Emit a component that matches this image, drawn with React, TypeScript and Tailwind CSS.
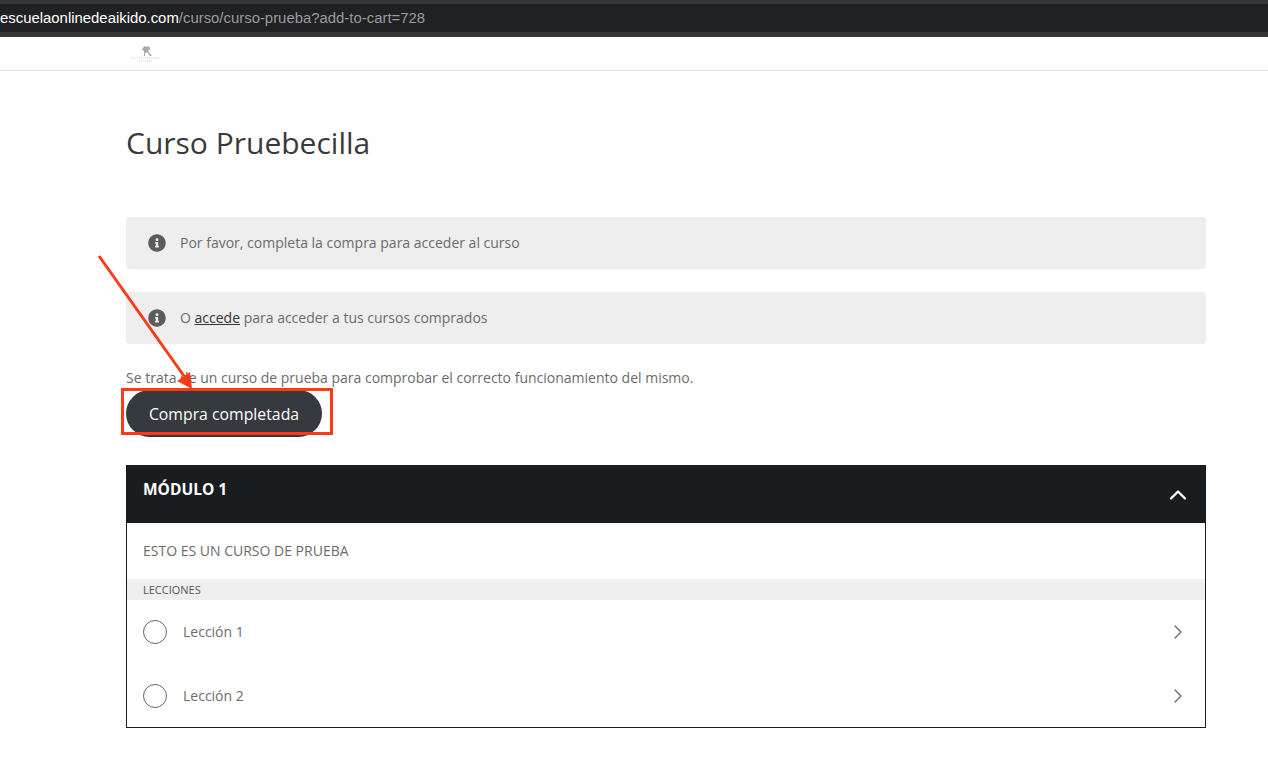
import { ChevronRight, ChevronUp } from 'lucide-react';

function InfoIcon() {
  return (
    <svg viewBox="0 0 512 512" className="w-[18px] h-[18px] shrink-0 fill-[#5c5c5c]">
      <path d="M256 8C119 8 8 119 8 256s111 248 248 248 248-111 248-248S393 8 256 8zm0 110c23 0 42 19 42 42s-19 42-42 42-42-19-42-42 19-42 42-42zm56 254c0 7-5 12-12 12h-88c-7 0-12-5-12-12v-24c0-7 5-12 12-12h12v-64h-12c-7 0-12-5-12-12v-24c0-7 5-12 12-12h64c7 0 12 5 12 12v100h12c7 0 12 5 12 12v24z" />
    </svg>
  );
}

function Notice({ children }: { children: React.ReactNode }) {
  return (
    <div className="h-[52px] bg-[#eeeeee] rounded-[4px] flex items-center pl-[22px] gap-[14px] text-[14px] text-[#6b6b6b]">
      <InfoIcon />
      <p className="-mt-[2px]">{children}</p>
    </div>
  );
}

function Lesson({ title }: { title: string }) {
  return (
    <div className="h-[64px] flex items-center pl-4 pr-[15px] text-[14px] text-[#6b6b6b]">
      <span className="w-6 h-6 rounded-full border border-[#666666] shrink-0" />
      <span className="ml-[16px] flex-1 -mt-[2px]">{title}</span>
      <ChevronRight className="w-6 h-6 text-[#666666]" strokeWidth={1.3} />
    </div>
  );
}

export default function App() {
  return (
    <div className="relative min-h-[768px] bg-white font-['Open_Sans',sans-serif] overflow-hidden">
      <div className="h-[37px] bg-[#36373b] pt-[4px] pb-[4px]">
        <div className="h-[28px] bg-[#202124] flex items-center font-['Liberation_Sans',sans-serif] text-[14.9px] text-[#9a9b9d] whitespace-nowrap">
          <span className="text-white">escuelaonlinedeaikido.com</span>/curso/curso-prueba?add-to-cart=728
        </div>
      </div>

      <header className="h-[34px] border-b border-[#e3e3e3] pl-[130px] flex items-start pt-[8px]">
        <svg viewBox="0 0 32 18" className="w-8 h-[18px]">
          <path d="M14 1l3 1 2-1 1 3-2 2 4 5h-2l-3-4-2 1v3h-1V6l-2-1z" fill="#a8a8a8" />
          <path d="M1 13h30M9 16h13" stroke="#c4c4c4" strokeWidth="0.8" strokeDasharray="1 1" />
        </svg>
      </header>

      <main className="mx-[126px] w-[1080px]">
        <h1 className="mt-[52px] text-[30px] leading-[40px] text-[#3a3a3a]">Curso Pruebecilla</h1>

        <div className="mt-[54px] flex flex-col gap-[23px]">
          <Notice>Por favor, completa la compra para acceder al curso</Notice>
          <Notice>
            O <a className="underline text-[#333333]">accede</a> para acceder a tus cursos comprados
          </Notice>
        </div>

        <p className="mt-[24px] text-[14px] leading-5 text-[#6b6b6b]">
          Se trata de un curso de prueba para comprobar el correcto funcionamiento del mismo.
        </p>

        <button className="mt-[2px] block w-[196px] h-[47px] pt-[3px] rounded-full bg-[#36393d] text-white text-[15.8px]">
          Compra completada
        </button>

        <section className="mt-[28px] border border-[#1a1d20] h-[263px]">
          <div className="-mx-px -mt-px h-[58px] bg-[#1a1d20] flex items-center justify-between pl-[17px] pr-[14px] text-white">
            <h2 className="text-[15.5px] font-bold -mt-[8px]">MÓDULO 1</h2>
            <ChevronUp className="w-7 h-7 mt-px" strokeWidth={2} />
          </div>
          <p className="h-[54px] flex items-center pl-4 text-[14px] text-[#6b6b6b]">ESTO ES UN CURSO DE PRUEBA</p>
          <div className="mt-[2px] h-[21px] pt-px bg-[#efefef] flex items-center pl-4 text-[11px] font-medium text-[#555555]">LECCIONES</div>
          <Lesson title="Lección 1" />
          <Lesson title="Lección 2" />
        </section>
      </main>

      {/* red annotation drawn over the page */}
      <div className="absolute left-[121px] top-[388px] w-[212px] h-[47px] border-[3px] border-[#fc3a16]" />
      <svg className="absolute left-0 top-0 pointer-events-none" width="240" height="400" viewBox="0 0 240 400">
        <line x1="99" y1="256" x2="184" y2="376" stroke="#fc3a16" strokeWidth="3" />
        <polygon points="192,389 177,381 190,372" fill="#fc3a16" />
      </svg>
    </div>
  );
}
